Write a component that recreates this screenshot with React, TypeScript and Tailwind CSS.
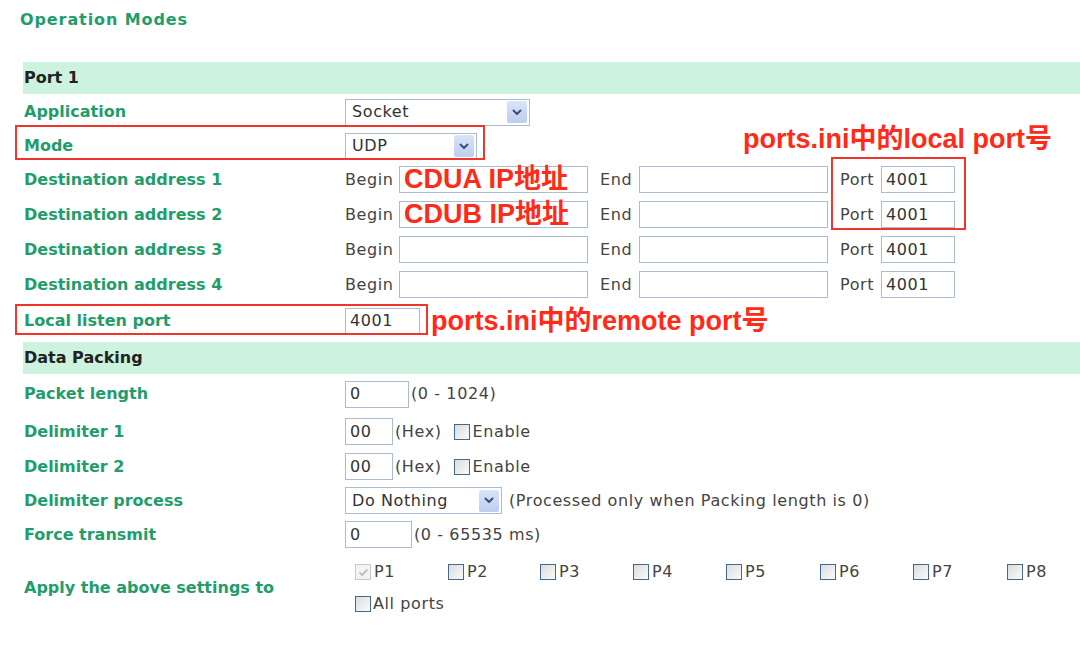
import React from 'react';

const font = { fontFamily: '"DejaVu Sans", Verdana, sans-serif' };

function Chevron() {
  return (
    <svg width="10" height="7" viewBox="0 0 10 7" fill="none">
      <path d="M1.5 1.5 L5 5 L8.5 1.5" stroke="#3b4f7c" strokeWidth="2" strokeLinecap="round" strokeLinejoin="round" />
    </svg>
  );
}

function Select({ value, width }: { value: string; width: string }) {
  return (
    <div className={`flex h-[27px] items-center justify-between border border-[#a9bcd4] bg-white pl-[6px] pr-[2px] ${width}`}>
      <span className="text-[16px] tracking-[0.6px] text-[#333]">{value}</span>
      <span className="flex h-[22px] w-[20px] items-center justify-center rounded-[2px] bg-gradient-to-b from-[#dbe5f8] to-[#bccdf0]">
        <Chevron />
      </span>
    </div>
  );
}

function Input({ value, width, children }: { value?: string; width: string; children?: React.ReactNode }) {
  return (
    <div className={`flex h-[27px] items-center overflow-visible whitespace-nowrap border border-[#a9bcd4] bg-white pl-[4px] text-[16px] tracking-[0.6px] text-[#333] ${width}`}>
      {children ?? value}
    </div>
  );
}

function Check({ disabled, checked }: { disabled?: boolean; checked?: boolean }) {
  return (
    <span
      className={`flex h-[16px] w-[16px] items-center justify-center border ${
        disabled ? 'border-[#c9c9c9] bg-[#f3f3f3]' : 'border-[#44698f] bg-gradient-to-br from-[#dcdcdc] to-[#fbfbfb]'
      }`}
    >
      {checked && (
        <svg width="11" height="9" viewBox="0 0 11 9" fill="none">
          <path d="M1.5 4.5 L4 7 L9.5 1.5" stroke="#b5b5b5" strokeWidth="1.6" />
        </svg>
      )}
    </span>
  );
}

function Row({ label, h, children }: { label: string; h: string; children?: React.ReactNode }) {
  return (
    <div className={`flex items-center ${h}`}>
      <div className="w-[322px] pl-[1px] text-[16px] font-bold text-[#1f9d6c]">{label}</div>
      <div className="flex items-center text-[16px] tracking-[0.6px] text-[#444]">{children}</div>
    </div>
  );
}

function Band({ title, h }: { title: string; h: string }) {
  return (
    <div className={`flex items-center bg-[#cdf2dd] pl-[1px] text-[16px] font-bold text-[#222] ${h}`}>{title}</div>
  );
}

const red = 'font-bold text-[#ff2a17] tracking-normal';
const redFont = { fontFamily: '"Liberation Sans", "Noto Sans CJK SC", sans-serif' };

function DestRow({ n, annot }: { n: number; annot?: string }) {
  return (
    <Row label={`Destination address ${n}`} h="h-[35px]">
      <span className="w-[54px]">Begin</span>
      <Input width="w-[189px]">
        {annot && (
          <span className={`text-[27px] leading-none ${red}`} style={redFont}>
            {annot}
          </span>
        )}
      </Input>
      <span className="w-[51px] pl-[12px]">End</span>
      <Input width="w-[189px]" />
      <span className="w-[53px] pl-[12px]">Port</span>
      <Input width="w-[74px]" value="4001" />
    </Row>
  );
}

export default function App() {
  return (
    <div className="relative h-[649px] w-[1080px] overflow-hidden bg-white" style={font}>
      <div className="pl-[20px] pt-[8px] text-[16px] font-bold tracking-[0.9px] text-[#1f9d6c]">Operation Modes</div>

      <div className="ml-[23px] mt-[30px]">
        <Band title="Port 1" h="h-[32px]" />
        <Row label="Application" h="h-[36px]">
          <Select value="Socket" width="w-[185px]" />
        </Row>
        <Row label="Mode" h="h-[32px]">
          <Select value="UDP" width="w-[132px]" />
        </Row>
        <DestRow n={1} annot="CDUA IP地址" />
        <DestRow n={2} annot="CDUB IP地址" />
        <DestRow n={3} />
        <DestRow n={4} />
        <Row label="Local listen port" h="h-[38px]">
          <Input width="w-[75px]" value="4001" />
          <span className={`ml-[11px] text-[27px] leading-none ${red}`} style={redFont}>
            ports.ini中的remote port号
          </span>
        </Row>
        <div className="pt-[2px]">
          <Band title="Data Packing" h="h-[32px]" />
        </div>
        <Row label="Packet length" h="h-[40px]">
          <Input width="w-[64px]" value="0" />
          <span className="pl-[2px]">(0 - 1024)</span>
        </Row>
        <Row label="Delimiter 1" h="h-[35px]">
          <Input width="w-[48px]" value="00" />
          <span className="pl-[2px]">(Hex)</span>
          <span className="ml-[12px] mr-[3px]"><Check /></span>
          <span>Enable</span>
        </Row>
        <Row label="Delimiter 2" h="h-[35px]">
          <Input width="w-[48px]" value="00" />
          <span className="pl-[2px]">(Hex)</span>
          <span className="ml-[12px] mr-[3px]"><Check /></span>
          <span>Enable</span>
        </Row>
        <Row label="Delimiter process" h="h-[33px]">
          <Select value="Do Nothing" width="w-[157px]" />
          <span className="pl-[7px]">(Processed only when Packing length is 0)</span>
        </Row>
        <Row label="Force transmit" h="h-[35px]">
          <Input width="w-[67px]" value="0" />
          <span className="pl-[2px]">(0 - 65535 ms)</span>
        </Row>
        <div className="flex items-center pt-[4px]">
          <div className="w-[322px] pl-[1px] text-[16px] font-bold text-[#1f9d6c]">Apply the above settings to</div>
          <div className="pl-[10px] text-[16px] tracking-[0.6px] text-[#444]">
            <div className="grid h-[32px] grid-cols-[93px_92px_93px_93px_94px_93px_94px_60px] items-center">
              {['P1', 'P2', 'P3', 'P4', 'P5', 'P6', 'P7', 'P8'].map((p, i) => (
                <div key={p} className="flex items-center gap-[3px]">
                  <Check disabled={i === 0} checked={i === 0} />
                  <span>{p}</span>
                </div>
              ))}
            </div>
            <div className="flex h-[32px] items-center gap-[2px]">
              <Check />
              <span>All ports</span>
            </div>
          </div>
        </div>
      </div>

      {/* annotations */}
      <div className="absolute left-[15px] top-[125px] h-[35px] w-[470px] border-2 border-[#f0362a]" />
      <div className="absolute left-[831px] top-[157px] h-[73px] w-[135px] border-2 border-[#f0362a]" />
      <div className="absolute left-[15px] top-[304px] h-[31px] w-[413px] border-2 border-[#f0362a]" />
      <div className={`absolute left-[743px] top-[126px] text-[27px] leading-none ${red}`} style={redFont}>
        ports.ini中的local port号
      </div>
    </div>
  );
}
